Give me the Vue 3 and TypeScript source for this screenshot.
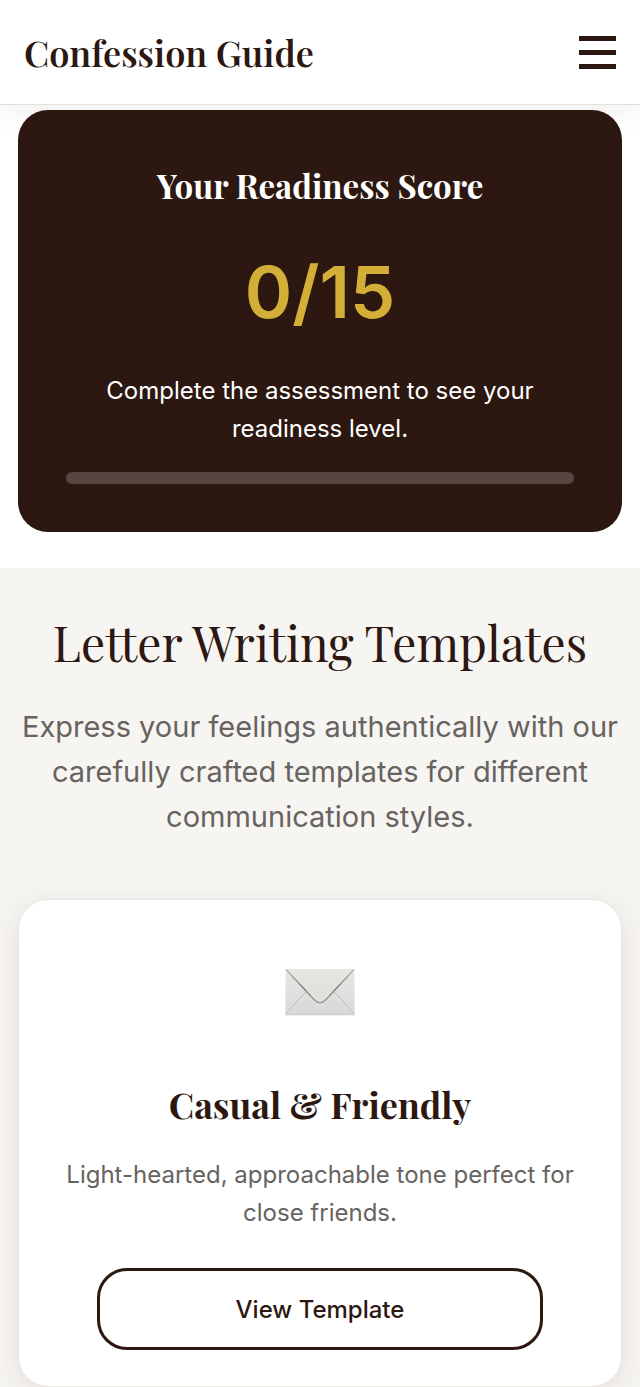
<script setup lang="ts">
import { computed, ref } from 'vue'

interface LetterTemplate {
  title: string
  description: string
}

const score = ref(0)
const total = 15
const progress = computed(() => `${(score.value / total) * 100}%`)

const templates: LetterTemplate[] = [
  {
    title: 'Casual & Friendly',
    description: 'Light-hearted, approachable tone perfect for close friends.',
  },
]
</script>

<template>
  <header class="topbar">
    <a class="brand" href="#">Confession Guide</a>
    <button class="menu" type="button" aria-label="Open menu">
      <span class="menu-line"></span>
      <span class="menu-line"></span>
      <span class="menu-line"></span>
    </button>
  </header>

  <main>
    <section class="assessment">
      <div class="score-card">
        <h3 class="score-title">Your Readiness Score</h3>
        <div class="score-value">{{ score }}/{{ total }}</div>
        <p class="score-text">Complete the assessment to see your readiness level.</p>
        <div class="track" role="progressbar" aria-label="Readiness" :aria-valuenow="score" aria-valuemin="0" :aria-valuemax="total">
          <div class="fill" :style="{ width: progress }"></div>
        </div>
      </div>
    </section>

    <section class="templates">
      <h2 class="section-title">Letter Writing Templates</h2>
      <p class="section-text">
        Express your feelings authentically with our carefully crafted templates for different communication styles.
      </p>

      <article v-for="item in templates" :key="item.title" class="template-card">
        <svg class="envelope" viewBox="0 0 70 48" aria-hidden="true">
          <defs>
            <linearGradient id="paper" x1="0" y1="0" x2="0" y2="1">
              <stop offset="0" stop-color="#e9e8e6" />
              <stop offset="1" stop-color="#d8d7d5" />
            </linearGradient>
            <linearGradient id="flap" x1="0" y1="0" x2="0" y2="1">
              <stop offset="0" stop-color="#e6e5e2" />
              <stop offset="1" stop-color="#dededc" />
            </linearGradient>
            <linearGradient id="edge" x1="0" y1="0" x2="0" y2="1">
              <stop offset="0" stop-color="#b5b4b1" />
              <stop offset="0.6" stop-color="#777673" />
              <stop offset="1" stop-color="#9b9a98" />
            </linearGradient>
          </defs>
          <rect x="0.5" y="1" width="69" height="46" rx="1" fill="url(#paper)" />
          <path d="M1 46 L21 24 M69 46 L49 24" fill="none" stroke="#b9b8b6" stroke-width="1" />
          <path d="M2 46 L21 26 M68 46 L49 26" fill="none" stroke="#f0efed" stroke-width="0.7" />
          <path d="M1 1 L29 31 Q35 38 41 31 L69 1 Z" fill="url(#flap)" />
          <path d="M1 1.5 L29 31.5 Q35 38 41 31.5 L69 1.5" fill="none" stroke="url(#edge)" stroke-width="1.2" />
          <path d="M0.5 46.8 H69.5" stroke="#c6c5c2" stroke-width="0.8" />
        </svg>
        <h3 class="template-title">{{ item.title }}</h3>
        <p class="template-text">{{ item.description }}</p>
        <button class="view" type="button">View Template</button>
      </article>
    </section>
  </main>
</template>

<style>
body {
  margin: 0;
  background: #fff;
}
</style>

<style scoped>
.topbar,
main {
  font-family: Inter, 'Liberation Sans', sans-serif;
  color: #2c1810;
}

.topbar {
  position: sticky;
  top: 0;
  z-index: 2;
  display: flex;
  align-items: center;
  justify-content: space-between;
  box-sizing: border-box;
  min-height: 105px;
  padding: 0 24px;
  border-bottom: 1px solid #e2e1dc;
  background: #fff;
  box-shadow: 0 3px 30px rgba(44, 24, 16, 0.08);
}

.brand,
.score-title,
.section-title,
.template-title {
  font-family: 'Playfair Display', 'Liberation Serif', serif;
}

.brand {
  color: inherit;
  font-size: 36px;
  font-weight: 600;
  line-height: 56px;
  text-decoration: none;
}

.menu {
  display: flex;
  flex-direction: column;
  gap: 9px;
  padding: 0;
  border: 0;
  background: none;
}

.menu-line {
  width: 37px;
  height: 5px;
  background: #2c1810;
}

.assessment {
  padding: 5px 18px 36px;
}

.score-card {
  padding: 48px;
  border-radius: 30px;
  background: #2c1810;
  color: #fff;
  text-align: center;
}

h2,
h3,
p {
  margin: 0;
}

.score-title {
  font-size: 33px;
  font-weight: 700;
  line-height: 54px;
}

.score-value {
  margin: 22px 0;
  color: #d4af37;
  font-size: 72px;
  font-weight: 600;
  line-height: 116px;
}

.score-text,
.template-text {
  font-size: 24px;
  line-height: 38px;
}

.track {
  height: 12px;
  margin-top: 24px;
  border-radius: 6px;
  overflow: hidden;
  background: rgba(255, 255, 255, 0.2);
}

.fill {
  height: 100%;
  background: #d4af37;
}

.templates {
  padding: 36px 18px;
  background: #f7f5f2;
  text-align: center;
}

.section-title {
  font-size: 48px;
  font-weight: 400;
  line-height: 76px;
}

.section-text {
  margin: 24px 0 60px;
  color: #666360;
  font-size: 29px;
  line-height: 45px;
}

.template-card {
  padding: 48px 36px 36px;
  border: 1px solid #e8e6e2;
  border-radius: 30px;
  background: #fff;
  box-shadow: 0 6px 30px rgba(44, 24, 16, 0.1);
}

.envelope {
  display: block;
  width: 70px;
  height: 48px;
  margin: 20px auto 60px;
}

.template-title {
  font-size: 36px;
  font-weight: 700;
  line-height: 56px;
}

.template-text {
  margin: 24px 0 36px;
  color: #666360;
}

.view {
  display: block;
  width: 84%;
  height: 82px;
  margin: 0 auto;
  border: 3px solid #2c1810;
  border-radius: 30px;
  background: transparent;
  color: #2c1810;
  font: 500 24px Inter, 'Liberation Sans', sans-serif;
}
</style>
